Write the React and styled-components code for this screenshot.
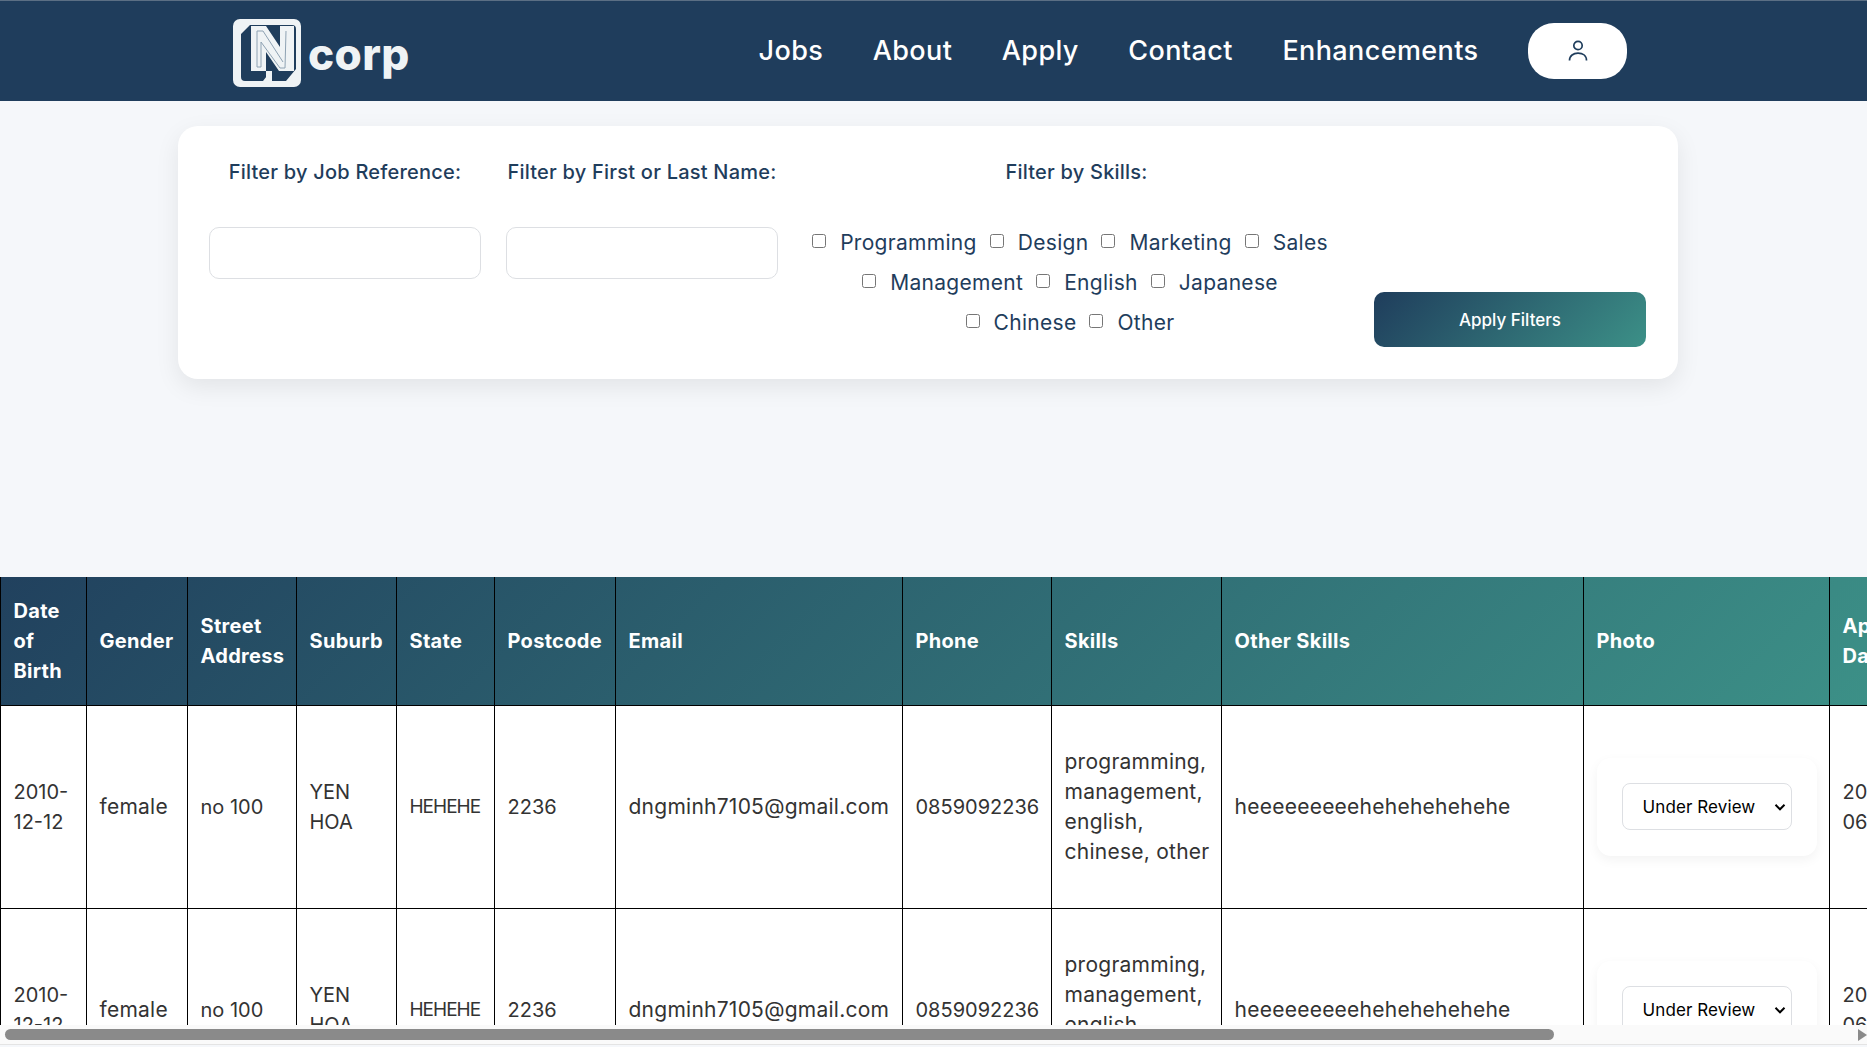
import React from 'react';
import styled, { createGlobalStyle } from 'styled-components';

const GlobalStyle = createGlobalStyle`
  html, body { margin: 0; padding: 0; height: 100%; overflow: hidden; background: #f5f7fa; }
  body { font-family: "Inter", "Liberation Sans", sans-serif; }
`;

const Page = styled.div`
  width: 1867px;
  height: 1047px;
  display: flex;
  flex-direction: column;
`;

const Header = styled.header`
  height: 100px;
  border-top: 1px solid #5b6f84;
  background: #1f3d5c;
  display: flex;
  align-items: center;
  padding-left: 233px;
  flex: none;
`;

const Logo = styled.div`
  display: flex;
  align-items: center;
  gap: 7px;
  width: 525.5px;
  margin-top: 4px;
`;

const LogoWord = styled.span`
  font-size: 44px;
  font-weight: 800;
  color: #eff3f5;
  line-height: 1;
  margin-top: 2px;
  letter-spacing: 0.4px;
`;

const Nav = styled.nav`
  display: flex;
  align-items: center;
  gap: 49.5px;
  margin-top: -1px;
`;

const NavLink = styled.a`
  font-size: 27px;
  font-weight: 500;
  letter-spacing: 0.4px;
  color: #fff;
  white-space: nowrap;
`;

const ProfileButton = styled.button`
  width: 99px;
  height: 56px;
  border: 0;
  border-radius: 26px;
  background: #fff;
  display: flex;
  align-items: center;
  justify-content: center;
  color: #1f3d5c;
  padding: 0;
`;

const FilterCard = styled.section`
  width: 1500px;
  height: 253px;
  margin: 25px 0 198px 178px;
  box-sizing: border-box;
  padding: 30px 32px 32px 31px;
  background: #fff;
  border-radius: 20px;
  box-shadow: 0 8px 24px rgba(0, 0, 0, 0.08);
  display: flex;
  flex: none;
`;

const FilterColumn = styled.div`
  width: ${p => p.$w}px;
  margin-right: ${p => p.$mr || 0}px;
  display: flex;
  flex-direction: column;
  align-items: center;
`;

const FilterLabel = styled.label`
  font-size: 20px;
  font-weight: 500;
  letter-spacing: 0.22px;
  color: #1f3d5c;
  line-height: 30px;
  height: 30px;
  margin: 1px 0 40px;
  padding-left: ${p => p.$inset || 0}px;
  white-space: nowrap;
`;

const TextField = styled.input`
  width: 100%;
  height: 52px;
  box-sizing: border-box;
  background: #fff;
  border: 1px solid #dddfe3;
  border-radius: 10px;
`;

const SkillWrap = styled.div`
  width: 540px;
  display: flex;
  flex-direction: column;
  align-items: center;
  margin-top: -5px;
`;

const SkillRow = styled.div`
  display: flex;
  height: 40px;
  align-items: center;
`;

const SkillItem = styled.label`
  display: flex;
  align-items: center;
  font-size: 21px;
  letter-spacing: 0.3px;
  color: #1f3d5c;
  margin-left: ${p => (p.$first ? 0 : 13)}px;
`;

const SkillBox = styled.input`
  width: 14px;
  height: 14px;
  margin: 0 14px 2px 0;
`;

const ApplyButton = styled.button`
  width: 272px;
  height: 55px;
  align-self: flex-end;
  border: 0;
  border-radius: 10px;
  background: linear-gradient(135deg, #1f3d5c, #3c9087);
  color: #fff;
  font-family: inherit;
  font-size: 17px;
  font-weight: 500;
`;

const TableScroller = styled.div`
  width: 100%;
  height: 448px;
  flex: none;
  overflow: hidden;
  background: #fff;
`;

const ScrollTrack = styled.div`
  height: 19px;
  flex: none;
  display: flex;
  align-items: center;
  background: #fafafa;
  border-bottom: 1px solid #e4e4e4;
`;

const ScrollThumb = styled.div`
  width: 1549px;
  height: 11px;
  margin-left: 5px;
  border-radius: 6px;
  background: #8a8a8a;
`;

const ScrollArrow = styled.div`
  margin-left: auto;
  width: 0;
  height: 0;
  border-style: solid;
  border-width: 6px 0 6px 9px;
  border-color: transparent transparent transparent #8a8a8a;
`;

const Table = styled.table`
  border-collapse: collapse;
  table-layout: fixed;
  width: 2205px;
  font-size: 21px;
  letter-spacing: 0.25px;
  line-height: 30px;
  color: #333;
`;

const HeadRow = styled.tr`
  height: 128px;
  background: linear-gradient(135deg, #21415e, #3c9087);
  background-size: 1867px 128px;
`;

const HeadCell = styled.th`
  border: 1px solid #000;
  border-top: 0;
  padding: 1px 10px 0 12.5px;
  text-align: left;
  font-weight: 700;
  color: #fff;
  font-size: 20px;
  letter-spacing: 0.3px;
`;

const BodyRow = styled.tr`
  height: 203px;
`;

const Cell = styled.td`
  border: 1px solid #000;
  padding: 1px 10px 0 12.5px;
  vertical-align: middle;
  overflow-wrap: break-word;
  ${p => p.$kind === 'plain' && 'font-size: 20px; letter-spacing: 0;'}
  ${p => p.$kind === 'caps' && 'font-size: 19px; letter-spacing: -1px; white-space: nowrap;'}
`;

const StatusCard = styled.div`
  width: 220px;
  height: 98px;
  box-sizing: border-box;
  padding: 25px;
  border-radius: 14px;
  background: #fff;
  box-shadow: 0 4px 12px rgba(0, 0, 0, 0.05);
`;

const chevron = "data:image/svg+xml,%3Csvg xmlns='http://www.w3.org/2000/svg' width='12' height='12' viewBox='0 0 12 12'%3E%3Cpath d='M1.5 3.8 L6 8.3 L10.5 3.8' fill='none' stroke='%23000' stroke-width='2'/%3E%3C/svg%3E";

const StatusSelect = styled.select`
  appearance: none;
  width: 170px;
  height: 47px;
  box-sizing: border-box;
  padding: 0 15px 0 20px;
  background: #fff url("${chevron}") no-repeat right 5px center;
  border: 1px solid #dddfe3;
  border-radius: 8px;
  font-family: inherit;
  font-size: 17px;
  letter-spacing: 0.1px;
  color: #000;
`;

const columns = [
  ['Date of Birth', 86],
  ['Gender', 101],
  ['Street Address', 109],
  ['Suburb', 100],
  ['State', 98],
  ['Postcode', 121],
  ['Email', 287],
  ['Phone', 149],
  ['Skills', 170],
  ['Other Skills', 362],
  ['Photo', 246],
  ['Apply Date', 100],
  ['Status', 276],
];

const row = [
  ['2010-12-12', 'plain'], ['female'], ['no 100', 'plain'], ['YEN HOA', 'plain'], ['HEHEHE', 'caps'], ['2236', 'plain'],
  ['dngminh7105@gmail.com'], ['0859092236', 'plain'],
  ['programming, management, english, chinese, other'],
  ['heeeeeeeeehehehehehehe'],
];

const NLogo = () => (
  <svg width="68" height="68" viewBox="0 0 68 68" aria-hidden="true">
    <rect width="68" height="68" rx="7" fill="#eff3f5" />
    <path d="M8 15 L17 6 H59 Q63 6 63 10 V50 L53 62 H37 V53 L30 62 H12 Q8 62 8 58 Z" fill="#1f3d5c" />
    <path d="M18 7 H33 L47 28 V7 H61 V52 H46 L33 33 V52 H18 Z" fill="#eff3f5" />
    <path d="M33 52 H39 V62 H33 Z" fill="#eff3f5" />
    <path d="M24 12 V48 H28 V23 L47 49 H52 L53 12 M24 12 H30 L50 43" fill="none" stroke="#8ea2b3" strokeWidth="1" />
  </svg>
);

const UserIcon = () => (
  <svg width="20" height="22" viewBox="0 0 20 22" fill="none" stroke="currentColor" strokeWidth="1.7" aria-hidden="true">
    <circle cx="10" cy="5.5" r="4.2" />
    <path d="M1.5 20.5 C1.5 15.5 5.5 13.2 10 13.2 C14.5 13.2 18.5 15.5 18.5 20.5" />
  </svg>
);

const skills = [
  ['Programming', 'Design', 'Marketing', 'Sales'],
  ['Management', 'English', 'Japanese'],
  ['Chinese', 'Other'],
];

const DataRow = () => (
  <BodyRow>
    {row.map(([v, kind], i) => <Cell key={i} $kind={kind}>{v}</Cell>)}
    <Cell>
      <StatusCard>
        <StatusSelect defaultValue="Under Review">
          <option>Under Review</option>
        </StatusSelect>
      </StatusCard>
    </Cell>
    <Cell $kind="plain">2025-06-01</Cell>
    <Cell />
  </BodyRow>
);

export default function App() {
  return (
    <Page>
      <GlobalStyle />
      <Header>
        <Logo>
          <NLogo />
          <LogoWord>corp</LogoWord>
        </Logo>
        <Nav>
          {['Jobs', 'About', 'Apply', 'Contact', 'Enhancements'].map(n => <NavLink key={n}>{n}</NavLink>)}
          <ProfileButton aria-label="Profile"><UserIcon /></ProfileButton>
        </Nav>
      </Header>
      <FilterCard>
        <FilterColumn $w={272} $mr={25}>
          <FilterLabel>Filter by Job Reference:</FilterLabel>
          <TextField />
        </FilterColumn>
        <FilterColumn $w={272} $mr={22}>
          <FilterLabel>Filter by First or Last Name:</FilterLabel>
          <TextField />
        </FilterColumn>
        <FilterColumn $w={540} $mr={34}>
          <FilterLabel $inset={13}>Filter by Skills:</FilterLabel>
          <SkillWrap>
            {skills.map((r, i) => (
              <SkillRow key={i}>
                {r.map((s, j) => (
                  <SkillItem key={s} $first={j === 0}>
                    <SkillBox type="checkbox" />
                    {s}
                  </SkillItem>
                ))}
              </SkillRow>
            ))}
          </SkillWrap>
        </FilterColumn>
        <ApplyButton>Apply Filters</ApplyButton>
      </FilterCard>
      <TableScroller>
        <Table>
          <colgroup>
            {columns.map(([n, w]) => <col key={n} style={{ width: w }} />)}
          </colgroup>
          <thead>
            <HeadRow>
              {columns.map(([n]) => <HeadCell key={n}>{n}</HeadCell>)}
            </HeadRow>
          </thead>
          <tbody>
            <DataRow />
            <DataRow />
          </tbody>
        </Table>
      </TableScroller>
      <ScrollTrack>
        <ScrollThumb />
        <ScrollArrow />
      </ScrollTrack>
    </Page>
  );
}
